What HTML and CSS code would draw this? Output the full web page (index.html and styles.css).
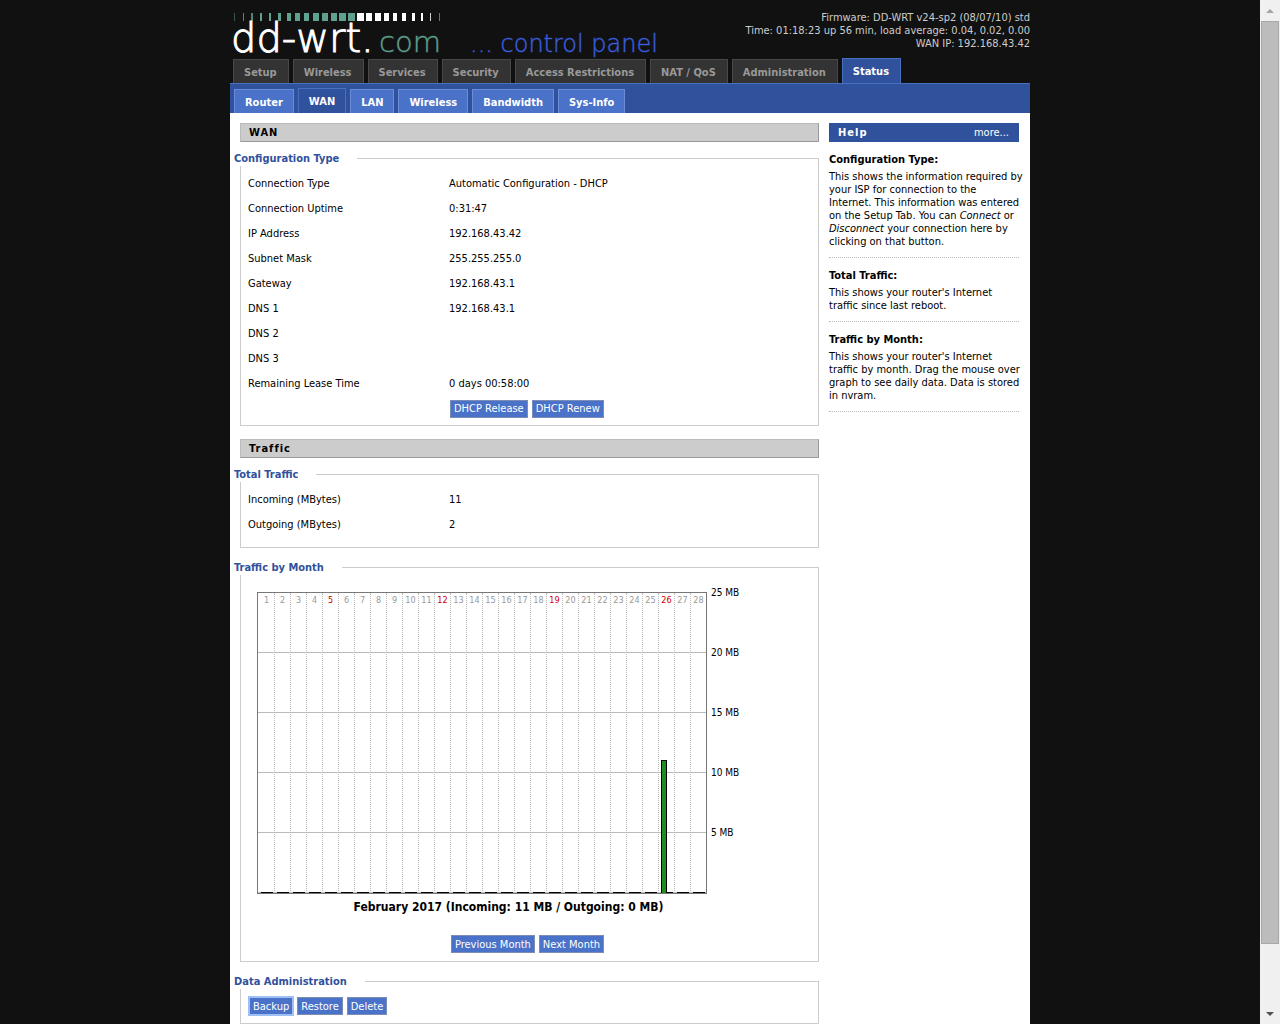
FILE: index.html
```html
<!DOCTYPE html>
<html lang="en">
<head>
    <meta charset="UTF-8">
    <meta name="viewport" content="width=device-width, initial-scale=1.0">
    <title>DD-WRT (build 14896) - WAN Status</title>
    <link rel="stylesheet" href="styles.css">
</head>
<body>
    <div class="viewport">
        <div class="wrapper">
            <header>
                <div class="top">
                    <svg class="logo" width="440" height="58" role="img" aria-label="dd-wrt.com control panel">
                        <g fill="#5fa08e">
                            <rect x="4" y="13" width="1" height="8" opacity=".5"/>
                            <rect x="13" y="13" width="1" height="8" opacity=".8"/>
                            <rect x="21" y="13" width="2" height="8" opacity=".8"/>
                            <rect x="30" y="13" width="2" height="8"/>
                            <rect x="39" y="13" width="2" height="8"/>
                            <rect x="48" y="13" width="3" height="8"/>
                            <rect x="57" y="13" width="4" height="8"/>
                            <rect x="65" y="13" width="5" height="8"/>
                            <rect x="74" y="13" width="5" height="8"/>
                            <rect x="83" y="13" width="6" height="8"/>
                            <rect x="92" y="13" width="6" height="8"/>
                            <rect x="101" y="13" width="6" height="8"/>
                            <rect x="109" y="13" width="7" height="8"/>
                            <rect x="118" y="13" width="7" height="8"/>
                        </g>
                        <g fill="#fff">
                            <rect x="127" y="13" width="7" height="8"/>
                            <rect x="136" y="13" width="6" height="8"/>
                            <rect x="145" y="13" width="6" height="8"/>
                            <rect x="154" y="13" width="5" height="8"/>
                            <rect x="163" y="13" width="4" height="8"/>
                            <rect x="172" y="13" width="4" height="8"/>
                            <rect x="182" y="13" width="3" height="8"/>
                            <rect x="191" y="13" width="2" height="8"/>
                            <rect x="200" y="13" width="1" height="8" opacity=".8"/>
                            <rect x="209" y="13" width="1" height="8" opacity=".4"/>
                        </g>
                        <text class="logo-name" x="1" y="52">dd-wrt.</text>
                        <text class="logo-com" x="149" y="52">com</text>
                        <text class="logo-panel" x="240" y="52">... control panel</text>
                    </svg>
                    <div class="info">
                        <div>Firmware: DD-WRT v24-sp2 (08/07/10) std</div>
                        <div>Time: 01:18:23 up 56 min, load average: 0.04, 0.02, 0.00</div>
                        <div>WAN IP: 192.168.43.42</div>
                    </div>
                </div>
                <nav class="menu-main">
                    <a href="#">Setup</a>
                    <a href="#">Wireless</a>
                    <a href="#">Services</a>
                    <a href="#">Security</a>
                    <a href="#">Access Restrictions</a>
                    <a href="#">NAT / QoS</a>
                    <a href="#">Administration</a>
                    <a href="#" class="current">Status</a>
                </nav>
                <nav class="menu-sub">
                    <a href="#">Router</a>
                    <a href="#" class="current">WAN</a>
                    <a href="#">LAN</a>
                    <a href="#">Wireless</a>
                    <a href="#">Bandwidth</a>
                    <a href="#">Sys-Info</a>
                </nav>
            </header>
            <div class="content">
                <main>
                    <h2>WAN</h2>
                    <fieldset>
                        <legend>Configuration Type</legend>
                        <div class="setting"><span class="label">Connection Type</span><span>Automatic Configuration - DHCP</span></div>
                        <div class="setting"><span class="label">Connection Uptime</span><span>0:31:47</span></div>
                        <div class="setting"><span class="label">IP Address</span><span>192.168.43.42</span></div>
                        <div class="setting"><span class="label">Subnet Mask</span><span>255.255.255.0</span></div>
                        <div class="setting"><span class="label">Gateway</span><span>192.168.43.1</span></div>
                        <div class="setting"><span class="label">DNS 1</span><span>192.168.43.1</span></div>
                        <div class="setting"><span class="label">DNS 2</span></div>
                        <div class="setting"><span class="label">DNS 3</span></div>
                        <div class="setting"><span class="label">Remaining Lease Time</span><span>0 days 00:58:00</span></div>
                        <div class="setting">
                            <span class="label"></span>
                            <div class="buttons">
                                <button type="button">DHCP Release</button>
                                <button type="button">DHCP Renew</button>
                            </div>
                        </div>
                    </fieldset>

                    <h2 class="next">Traffic</h2>
                    <fieldset class="totals">
                        <legend>Total Traffic</legend>
                        <div class="setting"><span class="label">Incoming (MBytes)</span><span>11</span></div>
                        <div class="setting"><span class="label">Outgoing (MBytes)</span><span>2</span></div>
                    </fieldset>

                    <fieldset class="next">
                        <legend>Traffic by Month</legend>
                        <div class="chart">
                            <div class="plot" id="plot"></div>
                            <div class="scale">
                                <span>25 MB</span>
                                <span>20 MB</span>
                                <span>15 MB</span>
                                <span>10 MB</span>
                                <span>5 MB</span>
                            </div>
                        </div>
                        <div class="chart-title">February 2017 (Incoming: 11 MB / Outgoing: 0 MB)</div>
                        <div class="buttons center">
                            <button type="button">Previous Month</button>
                            <button type="button">Next Month</button>
                        </div>
                    </fieldset>

                    <fieldset class="next">
                        <legend>Data Administration</legend>
                        <div class="buttons admin">
                            <button type="button" class="focused">Backup</button>
                            <button type="button">Restore</button>
                            <button type="button">Delete</button>
                        </div>
                    </fieldset>
                </main>
                <aside>
                    <div class="help-title"><h2>Help</h2><a href="#">more...</a></div>
                    <dl>
                        <dt>Configuration Type:</dt>
                        <dd><p>This shows the information required by your ISP for connection to the<br>Internet. This information was entered on the Setup Tab. You can <i>Connect</i> or <i>Disconnect</i> your connection here by clicking on that button.</p></dd>
                        <dt>Total Traffic:</dt>
                        <dd><p>This shows your router's Internet<br>traffic since last reboot.</p></dd>
                        <dt>Traffic by Month:</dt>
                        <dd><p>This shows your router's Internet<br>traffic by month. Drag the mouse over graph to see daily data. Data is stored in nvram.</p></dd>
                    </dl>
                </aside>
            </div>
        </div>
    </div>
    <div class="scrollbar">
        <button type="button" class="arrow" aria-label="Scroll up"><svg width="8" height="4"><path d="M0 4 4 0 8 4z" fill="#a3a3a3"/></svg></button>
        <div class="track"><div class="thumb"></div></div>
        <button type="button" class="arrow" aria-label="Scroll down"><svg width="8" height="4"><path d="M0 0h8L4 4z" fill="#505050"/></svg></button>
    </div>
    <script src="script.js"></script>
</body>
</html>
```

FILE: styles.css
```css
* {
    box-sizing: border-box;
}
body {
    display: flex;
    height: 100vh;
    margin: 0;
    overflow: hidden;
    background: #111;
    color: #000;
    font-family: Tahoma, "DejaVu Sans Condensed", "DejaVu Sans", sans-serif;
    font-size: 11px;
    line-height: 13px;
}
a {
    color: inherit;
    text-decoration: none;
}
.viewport {
    flex: 1;
    overflow: hidden;
}
.wrapper {
    max-width: 800px;
    min-height: 100vh;
    margin: 0 auto;
    background: #fff;
}

/* header */
header {
    background: #111;
}
.top {
    display: flex;
    justify-content: space-between;
    height: 58px;
}
.logo {
    flex: none;
    overflow: visible;
}
.logo text {
    font-family: "DejaVu Sans Light", "DejaVu Sans", sans-serif;
    font-weight: 200;
}
.logo .logo-name {
    font-size: 40px;
    fill: #fff;
    stroke: #fff;
}
.logo .logo-com {
    font-size: 29px;
    fill: #5fa08e;
    stroke: #5fa08e;
    stroke-opacity: .4;
}
.logo .logo-panel {
    font-size: 24px;
    fill: #3b5fe0;
    stroke: #3b5fe0;
    stroke-opacity: .4;
}
.info {
    padding-top: 11px;
    color: #ccc;
    text-align: right;
    white-space: nowrap;
}
.menu-main,
.menu-sub {
    display: flex;
    align-items: flex-end;
    gap: 4px;
    font-weight: bold;
    white-space: nowrap;
}
.menu-main {
    height: 25px;
    padding-left: 3px;
}
.menu-main a {
    height: 24px;
    padding: 6px 11px 0 10px;
    border: 1px solid #484848;
    border-bottom: 0;
    background: #333;
    color: #999;
}
.menu-main .current {
    height: 25px;
    border-color: #4a6fc0;
    background: #30519c;
    color: #fff;
}
.menu-sub {
    height: 30px;
    padding-left: 4px;
    border-top: 1px solid #4a6fc0;
    background: #30519c;
    color: #fff;
}
.menu-sub a {
    height: 24px;
    padding: 6px 10px 0;
    border: 1px solid #6b8cda;
    border-bottom: 0;
    background: #4a72c8;
}
.menu-sub .current {
    height: 25px;
    border-color: #4a6fc0;
    background: #30519c;
}

/* content */
.content {
    display: flex;
    gap: 10px;
    padding: 10px 11px 0 10px;
}
main {
    flex: 1;
    min-width: 0;
}
h2 {
    height: 19px;
    margin: 0 0 9px;
    padding: 2px 8px;
    border: 1px solid #999;
    border-top-color: #bbb;
    border-left-color: #bbb;
    background: #ccc;
    font-size: 11px;
    letter-spacing: 1px;
}
h2.next {
    margin-top: 13px;
}
fieldset {
    min-width: 0;
    margin: 0;
    padding: 5px 7px 4px;
    border: 1px solid #ccc;
}
fieldset.next {
    margin-top: 12px;
}
fieldset.totals {
    padding-bottom: 10px;
}
legend {
    margin-left: -14px;
    padding: 0 18px 0 0;
    background: #fff;
    color: #30519c;
    font-weight: bold;
    line-height: 15px;
}
.setting {
    display: flex;
    align-items: center;
    height: 25px;
}
.label {
    flex: none;
    width: 201px;
}
.buttons {
    display: flex;
    gap: 4px;
    padding-left: 1px;
}
button {
    height: 18px;
    padding: 0 3px;
    border: 1px solid #7b8db5;
    background: #4a72c8;
    color: #fff;
    font: inherit;
}
.focused {
    border-color: #9fc0f5;
    outline: 1px solid #9fc0f5;
}
.center {
    justify-content: center;
    margin: 20px 0 4px;
    padding: 0 4px 0 0;
}
.admin {
    padding: 3px 0 4px 1px;
}

/* traffic graph */
.chart {
    display: flex;
    gap: 4px;
    padding: 6px 0 0 9px;
    font-size: 10px;
}
.plot {
    display: grid;
    grid-template-columns: repeat(28, 16px);
    height: 302px;
    margin-top: 6px;
    border: 1px solid #777;
    background: repeating-linear-gradient(#fff 0 59px, #bbb 59px 60px);
}
.day {
    display: flex;
    flex-direction: column;
    justify-content: space-between;
    border-left: 1px dotted #bbb;
    color: #999;
    text-align: center;
    font-size: 9px;
    line-height: 15px;
}
.day:first-child {
    border-color: transparent;
}
.sunday {
    color: #c00;
}
.bars {
    display: flex;
    align-items: flex-end;
    padding-left: 2px;
}
.bar {
    width: 6px;
    border: 1px solid #000;
    border-bottom: 0;
    background: #228b22;
}
.scale {
    display: grid;
    grid-auto-rows: 60px;
    line-height: 14px;
}
.chart-title {
    margin-top: 6px;
    padding-right: 42px;
    font-size: 12px;
    font-weight: bold;
    line-height: 15px;
    text-align: center;
}

/* help */
aside {
    flex: none;
    width: 190px;
}
.help-title {
    display: flex;
    justify-content: space-between;
    align-items: center;
    height: 19px;
    padding-right: 10px;
    background: #30519c;
    color: #fff;
}
.help-title h2 {
    margin: 0;
    padding: 3px 9px;
    border: 0;
    background: none;
}
dl {
    margin: 0;
}
dt {
    padding: 11px 0 4px;
    font-weight: bold;
}
dd {
    margin: 0;
    padding-bottom: 9px;
    border-bottom: 1px dotted #bbb;
}
dd p {
    margin: 0 -7px 0 0;
}

/* scrollbar */
.scrollbar {
    display: flex;
    flex-direction: column;
    width: 20px;
    padding: 0 1px;
    background: #f0f0f0;
}
.arrow {
    display: flex;
    align-items: center;
    justify-content: center;
    height: 21px;
    border: 0;
    background: none;
}
.track {
    flex: 1;
}
.thumb {
    height: 94%;
    border: 1px solid #a8a8a8;
    background: #bcbcbc;
}
```

FILE: script.js
```js
// traffic per day of the month, in MB
const incoming = { 26: 11 };
const sundays = [5, 12, 19, 26];
const plot = document.getElementById('plot');

for (let day = 1; day <= 28; day++) {
    const height = Math.round((incoming[day] || 0) * 12) + 1;
    const column = document.createElement('div');
    column.className = sundays.includes(day) ? 'day sunday' : 'day';
    column.innerHTML = `<span>${day}</span>
        <div class="bars">
            <div class="bar" style="height: ${height}px"></div>
            <div class="bar" style="height: 1px"></div>
        </div>`;
    plot.appendChild(column);
}
```
